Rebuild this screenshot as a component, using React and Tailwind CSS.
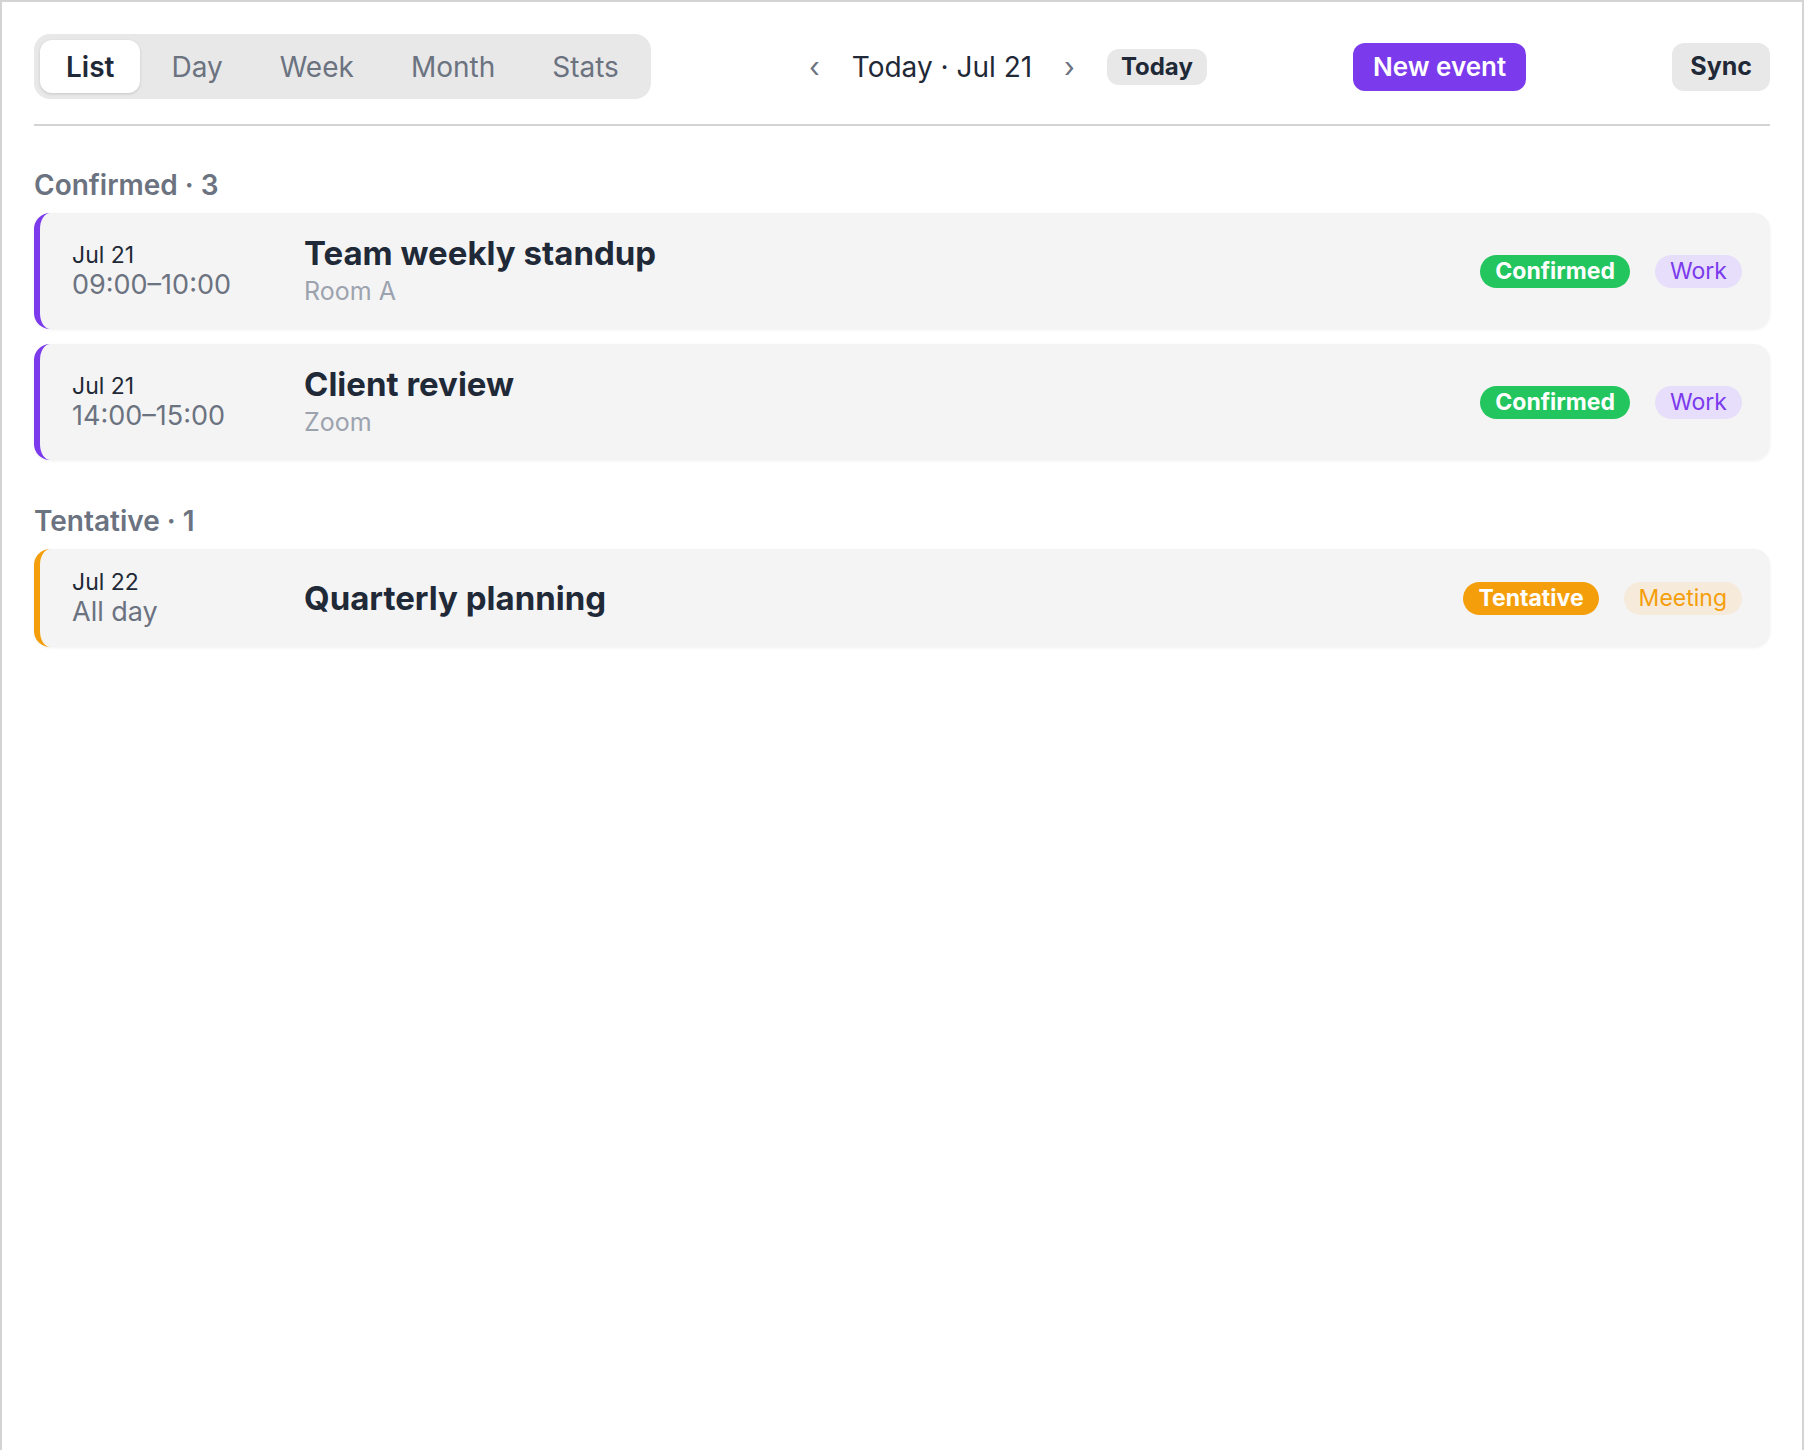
import React, { useState } from "react";

const tabs = ["List", "Day", "Week", "Month", "Stats"];

const groups = [
  {
    title: "Confirmed · 3",
    events: [
      {
        id: 1,
        date: "Jul 21",
        time: "09:00–10:00",
        name: "Team weekly standup",
        place: "Room A",
        status: "Confirmed",
        tag: "Work",
      },
      {
        id: 2,
        date: "Jul 21",
        time: "14:00–15:00",
        name: "Client review",
        place: "Zoom",
        status: "Confirmed",
        tag: "Work",
      },
    ],
  },
  {
    title: "Tentative · 1",
    events: [
      {
        id: 3,
        date: "Jul 22",
        time: "All day",
        name: "Quarterly planning",
        status: "Tentative",
        tag: "Meeting",
      },
    ],
  },
];

function EventCard({ ev }) {
  const tentative = ev.status === "Tentative";
  return (
    <div
      className={`flex items-center rounded-2xl bg-[#f4f4f4] border-l-[6px] pl-8 pr-7 py-5 shadow-[0_1px_3px_rgba(0,0,0,0.06)] ${
        tentative ? "border-[#f59e0b]" : "border-[#7c3aed]"
      }`}
    >
      <div className="w-[232px] shrink-0">
        <div className="text-[23px] leading-[27px] text-[#1f2937]">{ev.date}</div>
        <div className="text-[27px] leading-[31px] text-[#6b7280]">{ev.time}</div>
      </div>
      <div className="flex-1">
        <div className="text-[33px] leading-[40px] font-bold text-[#1f2937]">{ev.name}</div>
        {ev.place && (
          <div className="text-[25px] leading-[36px] text-[#9ca3af]">{ev.place}</div>
        )}
      </div>
      <div className="flex items-center gap-[25px]">
        <span
          className={`rounded-full px-[15px] h-[33px] flex items-center text-[23px] font-bold text-white ${
            tentative ? "bg-[#f59e0b]" : "bg-[#22c55e]"
          }`}
        >
          {ev.status}
        </span>
        <span
          className={`rounded-full px-[15px] h-[33px] flex items-center text-[23px] ${
            tentative
              ? "bg-[#f6eadb] text-[#f59e0b]"
              : "bg-[#e6defa] text-[#7c3aed]"
          }`}
        >
          {ev.tag}
        </span>
      </div>
    </div>
  );
}

export default function App() {
  const [active, setActive] = useState("List");

  return (
    <div
      className="h-screen bg-white border-x-2 border-t-2 border-[#d4d4d4] px-8 pt-8"
      style={{ fontFamily: "Inter, 'Noto Sans', sans-serif" }}
    >
      {/* Toolbar */}
      <div className="flex items-center justify-between pb-[25px] border-b-2 border-[#d4d4d4]">
        <div className="flex items-center gap-[5px] rounded-2xl bg-[#e8e8e8] p-[6px]">
          {tabs.map((t) => (
            <button
              key={t}
              onClick={() => setActive(t)}
              className={`h-[53px] px-[26px] rounded-xl text-[28px] ${
                active === t
                  ? "bg-white font-semibold text-[#1f2937] shadow-[0_1px_3px_rgba(0,0,0,0.15)]"
                  : "text-[#6b7280]"
              }`}
            >
              {t}
            </button>
          ))}
        </div>

        <div className="flex items-center">
          <button className="px-3 text-[28px] text-[#6b7280]">‹</button>
          <span className="mx-5 text-[28px] text-[#1f2937]">Today · Jul 21</span>
          <button className="px-3 text-[28px] text-[#6b7280]">›</button>
          <button className="ml-5 h-[36px] px-[14px] rounded-xl bg-[#e8e8e8] text-[24px] font-bold text-[#1f2937]">
            Today
          </button>
        </div>

        <button className="h-[48px] px-[20px] rounded-xl bg-[#7c3aed] text-[26px] font-semibold text-white">
          New event
        </button>

        <button className="h-[48px] px-[18px] rounded-xl bg-[#e8e8e8] text-[25px] font-bold text-[#1f2937]">
          Sync
        </button>
      </div>

      {/* Groups */}
      <div className="pt-[42px] flex flex-col gap-[44px]">
        {groups.map((g) => (
          <div key={g.title}>
            <h2 className="text-[28px] leading-[34px] font-semibold text-[#6b7280] mb-[11px]">
              {g.title}
            </h2>
            <div className="flex flex-col gap-[15px]">
              {g.events.map((ev) => (
                <EventCard key={ev.id} ev={ev} />
              ))}
            </div>
          </div>
        ))}
      </div>
    </div>
  );
}
